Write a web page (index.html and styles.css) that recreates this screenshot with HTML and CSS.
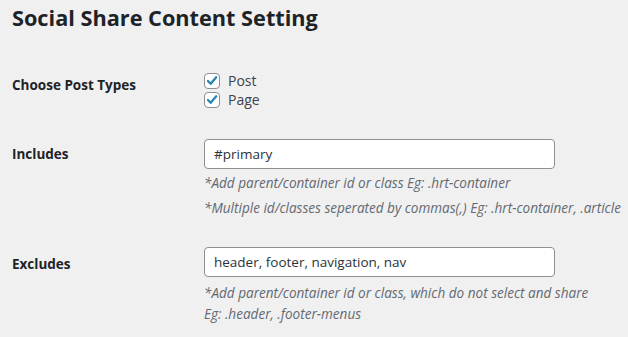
FILE: index.html
```html
<!DOCTYPE html>
<html lang="en">
<head>
  <meta charset="UTF-8" />
  <title>Social Share Content Setting</title>
  <link rel="stylesheet" href="styles.css">
</head>
<body>
  <div class="wrap">
    <h1>Social Share Content Setting</h1>

    <div class="row row-types">
      <div class="label">Choose Post Types</div>
      <div class="field">
        <label class="check">
          <span class="box"><svg viewBox="0 0 16 16" width="16" height="16"><path d="M3.4 8 L6.5 11.2 L12.8 3.8" fill="none" stroke="#2a87b3" stroke-width="2.7" stroke-linecap="round" stroke-linejoin="round"/></svg></span>
          Post
        </label>
        <label class="check">
          <span class="box"><svg viewBox="0 0 16 16" width="16" height="16"><path d="M3.4 8 L6.5 11.2 L12.8 3.8" fill="none" stroke="#2a87b3" stroke-width="2.7" stroke-linecap="round" stroke-linejoin="round"/></svg></span>
          Page
        </label>
      </div>
    </div>

    <div class="row row-includes">
      <div class="label">Includes</div>
      <div class="field">
        <input class="text" type="text" value="#primary" />
        <p class="desc">*Add parent/container id or class Eg: .hrt-container</p>
        <p class="desc">*Multiple id/classes seperated by commas(,) Eg: .hrt-container, .article</p>
      </div>
    </div>

    <div class="row row-excludes">
      <div class="label">Excludes</div>
      <div class="field">
        <input class="text" type="text" value="header, footer, navigation, nav" />
        <p class="desc tight">*Add parent/container id or class, which do not select and share<br>Eg: .header, .footer-menus</p>
      </div>
    </div>
  </div>
</body>
</html>
```

FILE: styles.css
```css
body {
  margin: 0;
  background: #f0f0f1;
  font-family: "Open Sans", "Noto Sans", sans-serif;
  color: #1d2327;
  font-size: 14px;
  overflow: hidden;
}
.wrap {
  padding: 0 12px;
}
h1 {
  font-size: 21.7px;
  font-weight: 700;
  margin: 0;
  padding-top: 3px;
  line-height: 30px;
}
.row {
  display: grid;
  grid-template-columns: 192px 1fr;
}
.label {
  font-weight: 700;
  font-size: 13.5px;
}
.row-types {
  margin-top: 38px;
}
.row-types .label {
  padding-top: 5px;
}
.check {
  display: flex;
  align-items: center;
  gap: 8px;
  height: 19px;
  color: #3c434a;
}
.box {
  width: 14px;
  height: 14px;
  border: 1px solid #8c8f94;
  border-radius: 4px;
  background: #fff;
  display: flex;
  align-items: center;
  justify-content: center;
}
.box svg {
  width: 14px;
  height: 14px;
}
.row-includes {
  margin-top: 30px;
}
.row-excludes {
  margin-top: 29px;
}
.row-includes .label {
  padding-top: 6px;
}
.row-excludes .label {
  padding-top: 8px;
}
.text {
  box-sizing: border-box;
  width: 351px;
  height: 30px;
  border: 1px solid #8c8f94;
  border-radius: 4px;
  background: #fff;
  padding: 0 9px;
  font-family: inherit;
  font-size: 13.5px;
  color: #2c3338;
  margin: 0;
}
.desc {
  margin: 4px 0 0;
  font-style: italic;
  font-size: 13.55px;
  color: #646970;
  line-height: 20px;
  white-space: nowrap;
}
.desc + .desc {
  margin-top: 5px;
}
.desc.tight {
  margin-top: 6px;
  line-height: 21px;
}
```
